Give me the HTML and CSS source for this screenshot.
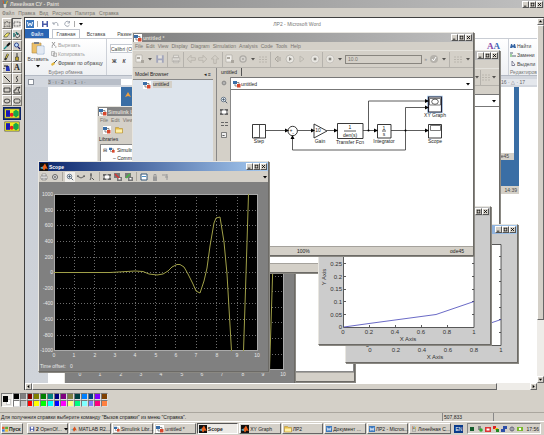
FILE: index.html
```html
<!DOCTYPE html>
<html lang="ru">
<head>
  <title>Линейная СУ - Paint</title>
  <meta charset="utf-8">
  <link rel="stylesheet" href="styles.css">
</head>
<body>
  <!-- shared icons -->
  <svg class="sprite" aria-hidden="true">
    <symbol id="min" viewBox="0 0 6 6"><path d="M1 5h3" stroke="#000"/></symbol>
    <symbol id="max" viewBox="0 0 6 6"><path d="M1 1.5h4M1.5 1v4M4.5 1v4M1 4.7h4" stroke="#000" stroke-width=".8"/></symbol>
    <symbol id="close" viewBox="0 0 6 6"><path d="M1.2 1.2l3.6 3.6M4.8 1.2L1.2 4.8" stroke="#000"/></symbol>
    <symbol id="down" viewBox="0 0 6 6"><path d="M1 2h4L3 4.500z"/></symbol>
    <symbol id="simulink" viewBox="0 0 8 8"><path fill="#fff" d="M0 0h8v8H0z"/><path fill="#3a6ea8" d="M0 1h4v3H0z"/><path fill="#d8482c" d="M4 4h3.500v3.500H4z"/><path d="M4 2.500h2V4M2 4v2h2" stroke="#444" fill="none" stroke-width=".6"/></symbol>
    <symbol id="matlab" viewBox="0 0 8 8"><path fill="#111" d="M0 0h8v8H0z"/><path fill="#4db8d8" d="M0 5l2.500-1.500L4 5 2.500 6z"/><path fill="#e8601c" d="M2.500 4L5 .5 7.700 6 5.500 5.500 4 7.500 3 6z"/></symbol>
    <symbol id="word" viewBox="0 0 8 8"><path fill="#3d78bd" d="M0 0h8v8H0z"/><path fill="none" stroke="#fff" d="M1.500 2l1 4L4 3l1.500 3 1-4"/></symbol>
    <symbol id="save" viewBox="0 0 8 8"><path fill="#4a5ba8" d="M1 1h6v6H1z"/><path fill="#fff" d="M2.500 1h3v2.500h-3zM2.500 5h3v2h-3z"/></symbol>
    <symbol id="printer" viewBox="0 0 8 8"><path fill="#fff" stroke="#777" stroke-width=".6" d="M2 1h4v2H2zM1 3h6v3H1zM2 5h4v2H2z"/></symbol>
    <symbol id="gear" viewBox="0 0 8 8"><circle cx="4" cy="4" r="2.500" fill="#ddd" stroke="#666"/><circle cx="4" cy="4" r=".9" fill="#666"/></symbol>
    <symbol id="zoom" viewBox="0 0 8 8"><circle cx="3.500" cy="3.500" r="2.300" fill="#e8f0f8" stroke="#567" stroke-width=".8"/><path d="M5.200 5.200l2 2M2.300 3.500h2.400M3.500 2.300v2.400" stroke="#456" stroke-width=".9"/></symbol>
    <symbol id="fit" viewBox="0 0 8 8"><path fill="#666" d="M0 1h8v6H0z"/><path fill="#fff" d="M2 2.500h4v3H2z"/><path stroke="#fff" d="M4 1v6M0 4h8" stroke-width=".8"/></symbol>
    <symbol id="left" viewBox="0 0 8 8"><path fill="none" stroke="#bab6ae" stroke-width=".8" d="M1 4l3-3v2h3.500v2H4v2z"/></symbol>
    <symbol id="folder" viewBox="0 0 8 8"><path fill="#e9bd45" stroke="#a98528" stroke-width=".5" d="M.5 1.500h3l1 1h3V7h-7z"/><path fill="#fff0a8" d="M1 3.500h6v3H1z"/></symbol>
    <symbol id="play" viewBox="0 0 10 10"><circle cx="5" cy="5" r="4" fill="#e9e7e2" stroke="#a5a29c" stroke-width=".6"/><path fill="#88857f" d="M4 3l3 2-3 2z"/></symbol>
    <symbol id="stop" viewBox="0 0 10 10"><circle cx="5" cy="5" r="4" fill="#e9e7e2" stroke="#b5b2ac" stroke-width=".6"/><path fill="#88857f" d="M3.700 3.700h2.600v2.600H3.700z"/></symbol>
    <symbol id="check" viewBox="0 0 10 10"><circle cx="5" cy="5" r="4" fill="#b5b2ac"/><path fill="none" stroke="#fff" d="M3 5l1.500 2L7 3"/></symbol>
    <symbol id="keys" viewBox="0 0 10 10"><path d="M1 3h8M1 5.500h8M1 8h8" stroke="#bab6ae" stroke-dasharray="2 1"/></symbol>
    <symbol id="newmodel" viewBox="0 0 10 10"><path fill="#f0eeea" stroke="#aaa69e" stroke-width=".6" d="M1 1h6v7H1z"/><path fill="#aaa69e" d="M2 3h3v2H2zM6 6h3v3H6z"/></symbol>
    <symbol id="paint" viewBox="0 0 8 8"><path fill="#d8d8d0" stroke="#555" stroke-width=".5" d="M2 3.500h4L5.500 8h-3z"/><path d="M3 4L2 .5" stroke="#d52" /><path d="M4 4V.5" stroke="#28a"/><path d="M5 4L6.500 1" stroke="#db2"/></symbol>
    <symbol id="shape" viewBox="0 0 12 8"><path fill="#f4ee20" stroke="#555" stroke-width=".5" d="M.5 .5h11v7H.5z"/><path fill="#1818b8" d="M1.500 1.500h3v5h-3z"/><circle cx="5.800" cy="5" r="1.500" fill="#e22"/><path fill="#18a848" d="M7 2.500L9 1.200l2 1.300v3L9 7 7 5.500z"/></symbol>

    <!-- step response on a 0..10 by -1000..1000 grid -->
    <symbol id="scopeplot" viewBox="39 181 229 189">
      <path fill="#000" d="M54 193h204v157H54z"/>
      <path class="grid" d="M74.500 193v157M94.500 193v157M115.500 193v157M135.500 193v157M155.500 193v157M175.500 193v157M196.500 193v157M216.500 193v157M237.500 193v157M54 209.500h204M54 224.500h204M54 240.500h204M54 256.500h204M54 271.500h204M54 287.500h204M54 302.500h204M54 318.500h204M54 334.500h204"/>
      <path d="M54.500 193v157M54 349.500h204M54 193.500h204M257.500 193v157" fill="none" stroke="#aaa"/>
      <path class="wave" d="M54 271.500H110L135 270 143 270.500 149 273 157 274 163 273 168 270 172 266 177 263.500H180L184 266 188 273 193 283 196 290 200 292 204 280 207 267 210 245 214 222 216 217 220 216 224 241 227 273 231.500 350M243.500 350L246 273 248.500 193"/>
      <g class="white-label end"><text x="53" y="195">1000</text><text x="53" y="211">800</text><text x="53" y="226">600</text><text x="53" y="242">400</text><text x="53" y="258">200</text><text x="53" y="273">0</text><text x="53" y="289">-200</text><text x="53" y="304">-400</text><text x="53" y="320">-600</text><text x="53" y="336">-800</text><text x="53" y="351">-1000</text></g>
      <g class="white-label mid"><text x="54" y="356">0</text><text x="74" y="356">1</text><text x="95" y="356">2</text><text x="115" y="356">3</text><text x="135" y="356">4</text><text x="156" y="356">5</text><text x="176" y="356">6</text><text x="196" y="356">7</text><text x="217" y="356">8</text><text x="237" y="356">9</text><text x="257" y="356">10</text></g>
      <text class="white-label" x="40" y="367">Time offset:&#160;&#160; 0</text>
    </symbol>

    <symbol id="xyplot" viewBox="319 215 171 127">
      <path fill="#fff" stroke="#333" stroke-width=".8" d="M343.500 225.500H474v101H343.500z"/>
      <path stroke="#333" stroke-width=".8" d="M369.500 326v-2M395.500 326v-2M421.500 326v-2M447.500 326v-2M344 313.500h2M344 300.500h2M344 288.500h2M344 275.500h2M344 262.500h2M344 250.500h2M474 313.500h-2M474 300.500h-2M474 288.500h-2M474 275.500h-2M474 262.500h-2M474 250.500h-2M474 237.500h-2"/>
      <path fill="none" stroke="#4444b8" stroke-width=".8" d="M344 326l25-3.500 67-9 38-13"/>
      <g class="axis-label end"><text x="342" y="328">0</text><text x="342" y="316">0.05</text><text x="342" y="303">0.1</text><text x="342" y="290">0.15</text><text x="342" y="278">0.2</text><text x="342" y="265">0.25</text></g>
      <g class="axis-label mid"><text x="343" y="333">0</text><text x="369" y="333">0.2</text><text x="395" y="333">0.4</text><text x="421" y="333">0.6</text><text x="447" y="333">0.8</text><text x="474" y="333">1</text><text x="408" y="340">X Axis</text><text transform="translate(326 276) rotate(-90)">Y Axis</text></g>
    </symbol>
  </svg>

  <header class="titlebar app-title">
    <svg class="i8"><use href="#paint"/></svg>
    <span class="title-text">Линейная СУ - Paint</span>
    <div class="win-buttons">
      <button aria-label="Свернуть"><svg><use href="#min"/></svg></button><button aria-label="Восстановить"><svg><use href="#max"/></svg></button><button aria-label="Закрыть"><svg><use href="#close"/></svg></button>
    </div>
  </header>
  <nav class="menu app-menu">
    <button>Файл</button><button>Правка</button><button>Вид</button><button>Рисунок</button><button>Палитра</button><button>Справка</button>
  </nav>

  <main>
    <aside class="toolbox">
      <div class="tools">
        <button aria-label="Произвольная область"><svg viewBox="0 0 8 8"><path fill="none" stroke="#333" stroke-dasharray="1 .5" stroke-width=".7" d="M4 1l1 2 2-1-1 3 1 2-3-1-3 1 1-3-1-2 2 .5z"/></svg></button>
        <button class="pressed" aria-label="Выделение"><svg viewBox="0 0 8 8"><path fill="none" stroke="#444" stroke-dasharray="1 .5" stroke-width=".8" d="M1 2h6v4H1z"/></svg></button>
        <button aria-label="Ластик"><svg viewBox="0 0 8 8"><path fill="#f4e96c" stroke="#333" stroke-width=".6" d="M1 5l3-3h3L4 6H1z"/></svg></button>
        <button aria-label="Заливка"><svg viewBox="0 0 8 8"><path fill="#ddd" stroke="#222" stroke-width=".7" d="M2 4l3-2 2 3-3 2z"/><path d="M1 2v4M3 1l2 3" stroke="#066" stroke-width="1.200"/></svg></button>
        <button aria-label="Выбор цветов"><svg viewBox="0 0 8 8"><path stroke="#188" stroke-width="1.300" d="M1 7l3-3"/><path stroke="#111" stroke-width="2" d="M4 4l3-3"/></svg></button>
        <button aria-label="Масштаб"><svg viewBox="0 0 8 8"><circle cx="3.500" cy="3" r="2" fill="#bfe0ff" stroke="#348"/><path stroke="#226" stroke-width="1.200" d="M5 5l2 2"/></svg></button>
        <button aria-label="Карандаш"><svg viewBox="0 0 8 8"><path stroke="#333" stroke-width="2.200" d="M2 7l3-6"/><path stroke="#e8d440" d="M3 5l2-4"/></svg></button>
        <button aria-label="Кисть"><svg viewBox="0 0 8 8"><path stroke="#333" d="M4 0v4"/><path fill="#bda224" stroke="#333" stroke-width=".6" d="M2.500 4h3v3.500h-3z"/></svg></button>
        <button aria-label="Распылитель"><svg viewBox="0 0 8 8"><path fill="#2334b8" d="M3 2h3l1 5H3z"/><path stroke="#111" d="M1 2h4M1 4v1"/></svg></button>
        <button class="letter-tool" aria-label="Надпись">A</button>
        <button aria-label="Линия"><svg viewBox="0 0 8 8"><path stroke="#111" stroke-width=".9" d="M1 1l6 6"/></svg></button>
        <button aria-label="Кривая"><svg viewBox="0 0 8 8"><path fill="none" stroke="#222" stroke-width=".9" d="M5 1q-3 1-1 3T3 7"/></svg></button>
        <button aria-label="Прямоугольник"><svg viewBox="0 0 8 8"><path fill="none" stroke="#222" stroke-width=".8" d="M1 2h6v4H1z"/></svg></button>
        <button aria-label="Многоугольник"><svg viewBox="0 0 8 8"><path fill="none" stroke="#222" stroke-width=".8" d="M1 7V4h2V2l4-1-2 3 2 3z"/></svg></button>
        <button aria-label="Эллипс"><svg viewBox="0 0 8 8"><ellipse cx="4" cy="4" rx="3" ry="2" fill="none" stroke="#222" stroke-width=".8"/></svg></button>
        <button aria-label="Скругленный прямоугольник"><svg viewBox="0 0 8 8"><rect x="1" y="2" width="6" height="4" rx="1.500" fill="none" stroke="#222" stroke-width=".8"/></svg></button>
      </div>
      <button class="option chosen" aria-label="Непрозрачный фон"><svg><use href="#shape"/></svg></button>
      <button class="option" aria-label="Прозрачный фон"><svg><use href="#shape"/></svg></button>
    </aside>

    <div class="workspace">
      <div class="canvas">
        <!-- Word -->
        <section class="word">
          <div class="word-title">
            <div class="quick"><svg class="i8"><use href="#word"/></svg><i></i><svg class="i8"><use href="#save"/></svg><svg class="i8" viewBox="0 0 8 8"><path fill="none" stroke="#a5abb5" d="M1 2v2h2M1 4q5-4 5 2"/></svg><svg class="i8" viewBox="0 0 8 8"><path fill="none" stroke="#a5abb5" d="M6 2a2.500 2.500 0 1 0 .5 3M6.500 1v2h-2"/></svg><i></i><svg class="i6"><use href="#down"/></svg></div>
            <span>ЛР2 - Microsoft Word</span>
          </div>
          <nav class="word-tabs"><button class="file">Файл</button><button class="current">Главная</button><button>Вставка</button><button>Разметка</button></nav>
          <div class="ribbon">
            <div class="group clipboard">
              <div class="group-body">
                <button class="paste"><svg viewBox="0 0 14 14"><path fill="#edc069" stroke="#b08a48" stroke-width=".6" d="M1 2h9v10H1z"/><path fill="#7a7f88" d="M3 1h5v2H3z"/><path fill="#fff" stroke="#7b9cc6" stroke-width=".6" d="M6 5h7v8H6z"/><path stroke="#9db6d6" stroke-width=".6" d="M7 7h5M7 9h5M7 11h5"/></svg>Вставить<svg class="i6"><use href="#down"/></svg></button>
                <div class="stack">
                  <button class="off"><svg class="i6" viewBox="0 0 6 6"><path stroke="#999" d="M1 0l3 4M4 0L1 4M.5 5h1.500M4 5h1.500"/></svg>Вырезать</button>
                  <button class="off"><svg class="i6" viewBox="0 0 6 6"><path fill="#eee" stroke="#999" stroke-width=".6" d="M.5.5h3v4h-3zM2.500 2h3v3.500h-3z"/></svg>Копировать</button>
                  <button><svg class="i6" viewBox="0 0 6 6"><path fill="#e4b73c" d="M0 4l3-2 1 2-3 2z"/><path stroke="#456" d="M3 3l3-3"/></svg>Формат по образцу</button>
                </div>
              </div>
              <div class="group-name">Буфер обмена</div>
            </div>
            <div class="group font-group">
              <input class="font-name" aria-label="Шрифт" value="Calibri (Осн">
              <div><button><b>Ж</b></button><button><b><i>К</i></b></button></div>
            </div>
            <div class="group style-group"><div class="big-a">A<span>A</span></div></div>
            <div class="group edit-group">
              <button><svg class="i6" viewBox="0 0 6 6"><path fill="#3564a3" d="M0 5l1-4h1l1 2 1-2h1l1 4H4L3 4 2 5z"/></svg>Найти</button>
              <button><svg class="i6" viewBox="0 0 6 6"><path stroke="#567" d="M0 1h3M2 4h4"/><path stroke="#4a4" d="M1 2v3"/></svg>Замени</button>
              <button><svg class="i6" viewBox="0 0 6 6"><path fill="#fff" stroke="#446" stroke-width=".6" d="M2 0v5l1-1 1 1V4h1z"/></svg>Выдели</button>
              <div class="group-name">Редактиров</div>
            </div>
          </div>
          <div class="ruler">
            <span class="tab-stop"></span>
            <div class="ruler-left">3 · ı · 2 · ı · 1 · ı ·</div><div class="ruler-mid"></div><div class="ruler-right">16 · △ · 17</div>
          </div>
          <div class="page-area">
            <div class="page">
              <div class="desk-left"><svg viewBox="0 0 8 8"><path fill="#f0a040" d="M1 6l3-5 3 5-3-1z"/></svg></div>
              <div class="desk-right"><div class="desk-screen"><div class="desk-foot">ode45</div></div><div class="desk-bar">14:39</div></div>
            </div>
          </div>
        </section>

        <!-- Simulink Library Browser -->
        <section class="window library">
          <header class="titlebar"><svg class="i8"><use href="#simulink"/></svg><span class="title-text">Simulink Library Browser</span></header>
          <nav class="menu"><button>File</button><button>Edit</button><button>View</button></nav>
          <div class="lib-tools"><svg class="i8"><use href="#simulink"/></svg><svg class="i8"><use href="#folder"/></svg></div>
          <div class="lib-label">Libraries</div>
          <div class="lib-tree"><div>⊟ <svg class="i6"><use href="#simulink"/></svg> Simulink</div><div class="child">– Commonly Used</div></div>
          <div class="win-status"></div>
        </section>

        <section class="window scope scope-back">
          <header class="titlebar active"><svg class="i8"><use href="#matlab"/></svg></header>
          <div class="scope-tools"></div>
          <svg class="scope-plot"><use href="#scopeplot"/></svg>
        </section>

        <section class="window model model-back">
          <header class="titlebar"><span class="title-text"></span>
            <div class="win-buttons"><button aria-label="Minimize"><svg><use href="#min"/></svg></button><button aria-label="Maximize"><svg><use href="#max"/></svg></button><button aria-label="Close"><svg><use href="#close"/></svg></button></div>
          </header>
          <nav class="menu"></nav>
          <div class="model-tools back-tools"><svg class="i6"><use href="#down"/></svg><i></i><svg class="i10"><use href="#keys"/></svg><svg class="i6"><use href="#down"/></svg></div>
          <div class="back-tab"></div>
          <div class="path back-path"><svg class="i6"><use href="#down"/></svg></div>
          <div class="back-body"></div>
          <div class="win-status"></div>
        </section>

        <section class="window xy xy-back">
          <header class="titlebar active"><span class="title-text"></span>
            <div class="win-buttons"><button aria-label="Minimize"><svg><use href="#min"/></svg></button><button aria-label="Maximize"><svg><use href="#max"/></svg></button><button aria-label="Close"><svg><use href="#close"/></svg></button></div>
          </header>
          <svg class="xy-plot"><use href="#xyplot"/></svg>
        </section>

        <section class="window xy xy-front">
          <header class="titlebar"><span class="title-text"></span>
            <div class="win-buttons"><button aria-label="Minimize"><svg><use href="#min"/></svg></button><button aria-label="Maximize"><svg><use href="#max"/></svg></button><button aria-label="Close"><svg><use href="#close"/></svg></button></div>
          </header>
          <svg class="xy-plot"><use href="#xyplot"/></svg>
        </section>

        <!-- model editor -->
        <section class="window model model-main">
          <header class="titlebar"><svg class="i8"><use href="#simulink"/></svg><span class="title-text">untitled *</span>
            <div class="win-buttons"><button aria-label="Minimize"><svg><use href="#min"/></svg></button><button aria-label="Maximize"><svg><use href="#max"/></svg></button><button aria-label="Close"><svg><use href="#close"/></svg></button></div>
          </header>
          <nav class="menu"><button>File</button><button>Edit</button><button>View</button><button>Display</button><button>Diagram</button><button>Simulation</button><button>Analysis</button><button>Code</button><button>Tools</button><button>Help</button></nav>
          <div class="model-tools">
            <svg class="i10"><use href="#newmodel"/></svg><svg class="i6"><use href="#down"/></svg><svg class="i10 faded"><use href="#save"/></svg><i></i>
            <svg class="i10 faded"><use href="#printer"/></svg><i></i>
            <svg class="i10"><use href="#left"/></svg><svg class="i10 flip"><use href="#left"/></svg><svg class="i10 up"><use href="#left"/></svg><i></i>
            <svg class="i10"><use href="#newmodel"/></svg><svg class="i10 faded"><use href="#gear"/></svg><svg class="i6"><use href="#down"/></svg><svg class="i10"><use href="#keys"/></svg><i></i>
            <svg class="i10" viewBox="0 0 10 10"><path fill="none" stroke="#aaa69e" d="M5 2L2 5l3 3zM7 3v4"/></svg><svg class="i10"><use href="#play"/></svg><svg class="i10" viewBox="0 0 10 10"><path fill="none" stroke="#bbb8b0" d="M3 2l4 3-4 3z"/></svg><svg class="i10"><use href="#stop"/></svg><i></i>
            <svg class="i10"><use href="#stop"/></svg><svg class="i6"><use href="#down"/></svg>
            <input class="stop-time" aria-label="Simulation stop time" value="10.0"><span class="more">»</span>
            <svg class="i10"><use href="#check"/></svg><svg class="i6"><use href="#down"/></svg><i></i><svg class="i10"><use href="#keys"/></svg><svg class="i6"><use href="#down"/></svg>
          </div>
          <div class="model-body">
            <div class="browser"><div class="browser-head"><span>Model Browser</span><span>◂ ≡</span></div><div class="browser-tree"><svg class="i8"><use href="#simulink"/></svg><span>untitled</span></div></div>
            <div class="editor">
              <div class="editor-tabs"><button>untitled</button></div>
              <div class="editor-row">
                <div class="side-tools"><svg class="i6"><use href="#gear"/></svg><svg class="i8"><use href="#zoom"/></svg><svg class="i8"><use href="#fit"/></svg><svg class="i8" viewBox="0 0 8 8"><path stroke="#666" stroke-dasharray="3 1" d="M1 2.500h7M1 5.500h7"/></svg><svg class="i6" viewBox="0 0 6 6"><path fill="#eee" stroke="#666" stroke-width=".8" d="M.5.5h5v5h-5z"/><path stroke="#666" d="M1.500 4l1-1 1 1"/></svg></div>
                <div class="editor-main">
                  <div class="path"><svg class="i8"><use href="#simulink"/></svg><select aria-label="Model path"><option>untitled</option></select><svg class="i6"><use href="#down"/></svg></div>
                  <svg class="diagram" viewBox="230 88 242 156">
                    <g fill="#fff" stroke="#222" stroke-width=".9">
                      <path d="M251.500 122.500h13v13.500h-13z"/><circle cx="291.700" cy="129" r="4.700"/><path d="M313 122l13 7-13 7z"/><path d="M336.500 121.500H362v15h-25.500zM376.500 122.500H390V136h-13.500z"/><path d="M427.500 122.500h13V136h-13z"/>
                      <path stroke="#a9cbef" stroke-width="2.500" d="M427.500 95h13v15h-13z"/><path stroke="#223" stroke-width="1.200" d="M427.500 95h13v15h-13z"/>
                      <path d="M428.500 96.500h11v6.500h-11zM429.500 123.500h10v5h-10z" stroke-width=".6"/><ellipse cx="434" cy="99.700" rx="3.300" ry="2.600" stroke-width=".7"/>
                    </g>
                    <path fill="none" stroke="#333" stroke-width=".8" d="M258.500 123v13M258 135.500h-5M264.500 128.500H287M296.500 128.500H313M326 128.500h10M362 128.500h14M367.500 128.500v-29.500H427M390 128.500h37M427 105.500h-22.500v42.500h-113V134M343 129h12M381 129h4"/>
                    <path d="M284 126.500l4 2-4 2zM310 126.500l4 2-4 2zM333 126.500l4 2-4 2zM373 126.500l4 2-4 2zM424 126.500l4 2-4 2zM424 97l4 2-4 2zM424 103.500l4 2-4 2zM289.500 137l2-4 2 4z"/><circle cx="367.500" cy="128.500" r="1"/><circle cx="404.500" cy="128.500" r="1"/>
                    <g class="block-label"><text x="258" y="141">Step</text><text x="319" y="141">Gain</text><text x="349" y="142">Transfer Fcn</text><text x="383" y="141">Integrator</text><text x="434" y="141">Scope</text><text x="434" y="115">XY Graph</text><text x="317" y="130">10</text><text x="349" y="127">1</text><text x="349" y="135">den(s)</text><text x="383" y="128">1</text><text x="383" y="134">s</text><text x="290" y="130">+</text><text x="292" y="133">-</text></g>
                  </svg>
                </div>
              </div>
            </div>
          </div>
          <div class="win-status model-status"><span>100%</span><span>ode45</span></div>
        </section>

        <section class="window scope scope-front">
          <header class="titlebar active"><svg class="i8"><use href="#matlab"/></svg><span class="title-text">Scope</span>
            <div class="win-buttons"><button aria-label="Minimize"><svg><use href="#min"/></svg></button><button aria-label="Maximize"><svg><use href="#max"/></svg></button><button aria-label="Close"><svg><use href="#close"/></svg></button></div>
          </header>
          <div class="scope-tools">
            <button aria-label="Print"><svg><use href="#printer"/></svg></button><button aria-label="Parameters"><svg><use href="#gear"/></svg></button><i></i>
            <button class="lit" aria-label="Zoom"><svg><use href="#zoom"/></svg></button>
            <button aria-label="Zoom X"><svg viewBox="0 0 8 8"><path fill="none" stroke="#555" stroke-width=".9" d="M0 3l2 1 2 1 2-1 2-1M1 2v2M7 2v2"/></svg></button>
            <button aria-label="Zoom Y"><svg viewBox="0 0 8 8"><path stroke="#555" d="M3 0v5M2 2h2M4 5l2 2M3 5l-1 2"/></svg></button><i></i>
            <button aria-label="Autoscale"><svg><use href="#fit"/></svg></button>
            <button aria-label="Save axes"><svg viewBox="0 0 8 8"><path fill="#777" d="M0 0h6v5H0zM3 4h5v4H3z"/><path stroke="#d33" stroke-width="1.500" d="M1 1l4 4"/><path fill="#fff" d="M4.500 5h2v1.500h-2z"/></svg></button>
            <button aria-label="Restore axes"><svg viewBox="0 0 8 8"><path fill="#777" d="M0 0h6v5H0zM3 4h5v4H3z"/><path stroke="#4b4" stroke-width="1.500" d="M1 5l4-4"/><path fill="#fff" d="M4.500 5h2v1.500h-2z"/></svg></button><i></i>
            <button aria-label="Floating scope"><svg viewBox="0 0 8 8"><path fill="#fff" stroke="#357" d="M1 1h6v6H1z"/><path stroke="#4a90c8" d="M2 3.500h4"/></svg></button>
            <button aria-label="Lock"><svg viewBox="0 0 8 8"><path fill="#999" d="M2 3.500h4V8H2z"/><path fill="none" stroke="#999" d="M3 4V1.500h2V4"/></svg></button>
            <button aria-label="Signal selection"><svg viewBox="0 0 8 8"><path fill="none" stroke="#999" d="M0 2h5M3 4h3M5 1v6"/></svg></button>
            <svg class="i6 tools-end"><use href="#down"/></svg>
          </div>
          <svg class="scope-plot"><use href="#scopeplot"/></svg>
        </section>
      </div>
      <div class="vscroll"><button aria-label="Вверх"><svg class="up"><use href="#down"/></svg></button><span class="thumb"></span><span class="track"></span><button aria-label="Вниз"><svg><use href="#down"/></svg></button></div>
      <div class="hscroll"><button aria-label="Влево"><svg class="turn-left"><use href="#down"/></svg></button><span class="thumb"></span><span class="track"></span><button aria-label="Вправо"><svg class="turn-right"><use href="#down"/></svg></button></div>
      <div class="corner"></div>
    </div>
  </main>

  <div class="colorbox">
    <div class="current-color"><span class="back-color"></span><span class="fore-color"></span></div>
    <div class="swatches" id="swatches"></div>
  </div>
  <div class="statusbar"><span class="hint">Для получения справки выберите команду "Вызов справки" из меню "Справка".</span><span class="coords">507,833</span><span class="size"></span></div>

  <footer class="taskbar">
    <button class="start"><svg class="i6" viewBox="0 0 8 8"><path fill="#e35b2c" d="M0 1l3.500 0v3H0z"/><path fill="#57ab3c" d="M4.200 1H8v3H4.200z"/><path fill="#3d7cd6" d="M0 4.500h3.500v3H0z"/><path fill="#f1c033" d="M4.200 4.500H8v3H4.200z"/></svg>Пуск</button>
    <div class="tasks">
      <button><svg class="i6"><use href="#save"/></svg><span><b>2</b> OpenOf...</span><svg class="i6"><use href="#down"/></svg></button>
      <button><svg class="i6" viewBox="0 0 8 8"><path fill="#4db8d8" d="M0 5l2.500-1.500L4 5 2.500 6z"/><path fill="#d8501c" d="M2.500 4L5 .5 7.700 6 5.500 5.500 4 7.500 3 6z"/></svg><span>MATLAB R2...</span></button>
      <button><svg class="i6"><use href="#simulink"/></svg><span>Simulink Libr...</span></button>
      <button><svg class="i8"><use href="#simulink"/></svg><span>untitled *</span></button>
      <button class="pressed"><svg class="i8"><use href="#matlab"/></svg><span>Scope</span></button>
      <button><svg class="i8"><use href="#matlab"/></svg><span>XY Graph</span></button>
      <button><svg class="i8"><use href="#folder"/></svg><span>ЛР2</span></button>
      <button><svg class="i6"><use href="#word"/></svg><span>Документ ...</span></button>
      <button><svg class="i6"><use href="#word"/></svg><span>ЛР2 - Micros...</span></button>
      <button><svg class="i6"><use href="#paint"/></svg><span>Линейная С...</span></button>
    </div>
    <span class="lang">EN</span>
    <div class="tray">
      <svg viewBox="0 0 6 6"><path fill="#145c2c" d="M1 1h4v4H1z"/></svg>
      <svg viewBox="0 0 6 6"><path fill="#888" d="M1 0h3v4H1z"/><circle cx="4" cy="4" r="1.800" fill="#3a3"/></svg>
      <svg viewBox="0 0 6 6"><path fill="#d33" d="M0 1h6v5H0z"/><path fill="#fff" d="M1.500 2.500h3v2h-3z"/></svg>
      <svg viewBox="0 0 6 6"><path fill="#d22" d="M0 0h3v3H0z"/><path fill="#eb2" d="M2 2h3v2H2z"/><path fill="#282" d="M3 3h3v3H3z"/></svg>
      <svg viewBox="0 0 6 6"><path fill="#2c4da8" d="M2 0h4v3H2zM0 3h4v3H0z"/></svg>
      <svg viewBox="0 0 6 6"><circle cx="3" cy="3" r="2" fill="#ddd" stroke="#667"/><path stroke="#667" d="M3 1v4"/></svg>
      <svg viewBox="0 0 6 6"><path fill="#76b82a" d="M0 1h6v4H0z"/><circle cx="3" cy="3" r="1.200" fill="#fff"/></svg>
      <time>17:56</time>
    </div>
  </footer>

  <script>
    "use strict";
// fill the palette, two rows of 14
let colors = ["#000000", "#808080", "#800000", "#808000", "#008000", "#008080", "#000080", "#800080", "#808040", "#004040", "#0080ff", "#004080", "#8000ff", "#804000",
  "#ffffff", "#c0c0c0", "#ff0000", "#ffff00", "#00ff00", "#00ffff", "#0000ff", "#ff00ff", "#ffff80", "#00ff80", "#80ffff", "#8080ff", "#ff0080", "#ff8040"];
let box = document.getElementById("swatches");
for (let i = 0; i < colors.length; i++) {
  let b = document.createElement("button");
  b.style.backgroundColor = colors[i];
  b.setAttribute("aria-label", colors[i]);
  box.appendChild(b);
}
  </script>
</body>
</html>
```
FILE: styles.css
```css
* {
  box-sizing: border-box;
}
body {
  margin: 0;
  height: 100vh;
  display: flex;
  flex-direction: column;
  overflow: hidden;
  background-color: #d4d0c8;
  font-family: "Liberation Sans", Arial, sans-serif;
  font-size: 5px;
  line-height: 6px;
  color: #222;
}
button, input, select {
  font: inherit;
  color: inherit;
  margin: 0;
  padding: 0;
  border: 0;
  border-radius: 0;
  background: none;
  white-space: nowrap;
}
svg {
  display: block;
  flex: none;
}
.sprite {
  position: absolute;
  width: 0;
  height: 0;
}
.i6 { width: 6px; height: 6px; }
.i8 { width: 8px; height: 8px; }
.i10 { width: 10px; height: 10px; }
.faded { opacity: .35; }
.flip { transform: scaleX(-1); }
.up { transform: rotate(180deg); }
.i10.up { transform: rotate(90deg); }
.turn-left { transform: rotate(90deg); }
.turn-right { transform: rotate(-90deg); }

/* title bars and menus */
.titlebar {
  display: flex;
  align-items: center;
  gap: 1px;
  height: 9px;
  padding: 0 1px;
  flex: none;
  background: linear-gradient(to right, #808080, #c0c0c0);
  color: #dedad2;
  font-weight: bold;
}
.titlebar.active {
  background: linear-gradient(to right, #0a246a, #a6caf0);
  color: #fff;
}
.title-text {
  flex: 1;
  white-space: nowrap;
}
.win-buttons {
  display: flex;
}
.win-buttons button {
  width: 7px;
  height: 7px;
  background-color: #d4d0c8;
  border: 1px solid;
  border-color: #fff #555 #555 #fff;
}
.win-buttons svg {
  width: 5px;
  height: 5px;
}
.app-title {
  height: 8px;
}
.menu {
  display: flex;
  align-items: center;
  gap: 3px;
  height: 8px;
  padding: 0 2px;
  flex: none;
  color: #77746e;
}
.app-menu {
  gap: 4px;
  height: 9px;
}

main {
  flex: 1;
  min-height: 0;
  display: flex;
}
.toolbox {
  width: 24px;
  padding: 1px 2px;
  flex: none;
}
.tools {
  display: grid;
  grid-template-columns: 1fr 1fr;
  grid-auto-rows: 11px;
  margin-bottom: 1px;
}
.tools button {
  display: flex;
  align-items: center;
  justify-content: center;
  border: 1px solid;
  border-color: #fff #77746e #77746e #fff;
}
.tools svg {
  width: 8px;
  height: 8px;
}
.tools .pressed {
  border-color: #555 #fff #fff #555;
  background-color: #eae8e4;
}
.letter-tool {
  font: bold 8px "Liberation Serif", serif;
}
.option {
  display: block;
  margin-left: 1px;
  padding: 1px;
}
.option svg {
  width: 16px;
  height: 11px;
}
.chosen {
  background-color: #0a246a;
}

.workspace {
  flex: 1;
  min-width: 0;
  display: grid;
  grid-template-columns: 1fr 7px;
  grid-template-rows: 1fr 7px;
  border-left: 1px solid #404040;
  border-top: 1px solid #404040;
}
.canvas {
  position: relative;
  overflow: hidden;
  min-height: 0;
}
.vscroll, .hscroll {
  display: flex;
  background-color: #eeece8;
}
.vscroll {
  flex-direction: column;
}
.vscroll button, .hscroll button, .thumb {
  border: 1px solid;
  border-color: #fff #666 #666 #fff;
  background-color: #d4d0c8;
}
.vscroll button, .hscroll button {
  width: 7px;
  height: 7px;
  flex: none;
}
.vscroll svg, .hscroll svg {
  width: 5px;
  height: 5px;
}
.vscroll .thumb { flex: 296; }
.vscroll .track { flex: 57; }
.hscroll .thumb { flex: 465; }
.hscroll .track { flex: 33; }

/* Word */
.word {
  height: 100%;
  display: flex;
  flex-direction: column;
  background-color: #fff;
  color: #444;
}
.word-title {
  height: 11px;
  flex: none;
  display: grid;
  grid-template-columns: 82px 1fr;
  align-items: center;
  text-align: center;
  color: #777;
}
.word-title span {
  padding-right: 50px;
}
.quick {
  display: flex;
  align-items: center;
  gap: 3px;
  padding-left: 1px;
}
.quick i {
  height: 6px;
  border-left: 1px solid #aaa;
}
.word-tabs {
  display: flex;
  height: 10px;
  flex: none;
  border-bottom: 1px solid #c9cdd4;
}
.word-tabs button {
  width: 32px;
}
.word-tabs .file {
  width: 24px;
  margin-right: 3px;
  background-color: #2a65b4;
  color: #fff;
}
.word-tabs .current {
  width: 28px;
  border: 1px solid #c0c5ce;
  border-bottom: 0;
  background-color: #fff;
}
.ribbon {
  display: flex;
  height: 37px;
  flex: none;
  border-bottom: 1px solid #b4bac4;
  background: linear-gradient(#fff, #eef0f3);
}
.group {
  flex: none;
  padding: 2px;
  border-right: 1px solid #cdd1d8;
}
.ribbon button {
  display: flex;
  align-items: center;
  gap: 1px;
}
.clipboard {
  width: 82px;
}
.group-body {
  display: flex;
  gap: 2px;
  height: 28px;
}
.ribbon .paste {
  flex-direction: column;
  width: 22px;
}
.paste svg:first-child {
  width: 14px;
  height: 14px;
}
.stack {
  display: flex;
  flex-direction: column;
  gap: 3px;
  padding-top: 1px;
}
.off {
  color: #a0a0a0;
}
.group-name {
  text-align: center;
  color: #777;
}
.font-group {
  flex: 1;
  border: 0;
  padding: 5px 3px;
}
.font-group div {
  display: flex;
  gap: 6px;
  padding: 5px 2px;
}
.font-name {
  width: 40px;
  height: 9px;
  border: 1px solid #c5cad2;
  background-color: #fff;
}
.style-group {
  width: 24px;
}
.big-a {
  font: bold 9px/10px "Liberation Serif", serif;
  color: #8848a8;
}
.big-a span {
  color: #3a6ab8;
}
.edit-group {
  width: 28px;
  border: 0;
  padding: 2px 1px;
}
.edit-group button {
  height: 9px;
}
.edit-group .group-name {
  text-align: left;
  padding-top: 1px;
}
.ruler {
  display: flex;
  align-items: center;
  height: 11px;
  flex: none;
  padding-left: 3px;
  background-color: #d3d7de;
  color: #666;
  white-space: nowrap;
}
.tab-stop {
  width: 6px;
  height: 6px;
  margin-right: 14px;
  border: 1px solid #8c929c;
  background-color: #fff;
}
.ruler-left {
  width: 73px;
  background-color: #b8bec8;
}
.ruler-mid {
  flex: 1;
  height: 6px;
  background-color: #fff;
}
.ruler-right {
  width: 46px;
  padding-left: 10px;
  background-color: #e4e7ec;
}
.page-area {
  flex: 1;
  min-height: 0;
  padding-left: 23px;
  background: linear-gradient(#c9ced6, #d0d4da);
}
.page {
  height: 100%;
  display: flex;
  justify-content: space-between;
  padding: 0 18px 0 73px;
  background-color: #fff;
}
.desk-left {
  width: 12px;
  height: 20px;
  padding: 4px 3px;
  background-color: #3a6ea5;
}
.desk-left svg {
  width: 8px;
  height: 8px;
}
.desk-right {
  width: 40px;
  height: 107px;
  display: flex;
  flex-direction: column;
  background-color: #3a6ea5;
}
.desk-screen {
  height: 73px;
  margin-right: 5px;
  display: flex;
  align-items: flex-end;
  background-color: #fff;
}
.desk-foot {
  flex: 1;
  height: 7px;
  padding-right: 5px;
  text-align: right;
  background-color: #d4d0c8;
}
.desk-bar {
  margin-top: auto;
  height: 8px;
  padding: 1px 2px;
  text-align: right;
  background-color: #d4d0c8;
}

/* windows lying on the canvas */
.window {
  position: absolute;
  display: flex;
  flex-direction: column;
  border: 1px solid;
  border-color: #e8e6e0 #6c6a66 #6c6a66 #e8e6e0;
  background-color: #d4d0c8;
  box-shadow: 1px 1px 0 #8a8882;
}
.library { left: 72px; top: 88px; width: 258px; height: 276px; }
.scope-back { left: 39px; top: 162px; width: 231px; height: 211px; }
.model-back { left: 135px; top: 32px; width: 340px; height: 223px; }
.xy-back { left: 320px; top: 206px; width: 173px; height: 139px; }
.xy-front { left: 293px; top: 188px; width: 173px; height: 139px; }
.model-main { left: 107px; top: 14px; width: 342px; height: 224px; }
.scope-front { left: 13px; top: 143px; width: 231px; height: 211px; }

.win-status {
  height: 9px;
  flex: none;
  border-top: 1px solid #a5a29c;
}
.lib-tools {
  display: flex;
  gap: 4px;
  height: 12px;
  padding: 2px 5px;
}
.lib-label {
  height: 8px;
  padding-left: 1px;
}
.lib-tree {
  flex: 1;
  margin-left: 2px;
  padding: 2px;
  border: 1px solid #888;
  background-color: #fff;
}
.lib-tree div {
  display: flex;
  gap: 2px;
  height: 8px;
  white-space: nowrap;
}
.lib-tree .child {
  padding-left: 10px;
}

.scope {
  background-color: #808080;
}
.scope-tools {
  display: flex;
  align-items: center;
  gap: 1px;
  height: 11px;
  flex: none;
  background-color: #d4d0c8;
}
.scope-tools button {
  width: 10px;
  height: 10px;
  padding: 1px;
}
.scope-tools button svg {
  width: 8px;
  height: 8px;
}
.scope-tools .lit {
  background-color: #f2f0ec;
}
.scope-tools i {
  height: 9px;
  border-left: 1px solid #aaa69e;
  margin: 0 1px;
}
.tools-end {
  margin-left: auto;
}
.scope-plot {
  width: 100%;
  height: 189px;
}
.grid {
  fill: none;
  stroke: #6c6c6c;
  stroke-width: 1;
  stroke-dasharray: 1 2;
}
.wave {
  fill: none;
  stroke: #a0a048;
  stroke-width: 1;
}
.white-label {
  font-size: 5px;
  fill: #e8e8e8;
}
.axis-label {
  font-size: 6px;
  fill: #333;
}
.end { text-anchor: end; }
.mid { text-anchor: middle; }

.xy {
  background-color: #ccc;
}
.xy-plot {
  width: 100%;
  height: 127px;
}

.model-tools {
  display: flex;
  align-items: center;
  justify-content: space-between;
  height: 18px;
  flex: none;
  padding: 0 2px;
  border-top: 1px solid #e4e2dc;
  border-bottom: 1px solid #b5b2ac;
}
.model-tools i {
  height: 15px;
  border-left: 1px solid #b5b2ac;
}
.model-tools .i6 {
  opacity: .6;
}
.back-tools {
  justify-content: flex-end;
}
.stop-time {
  width: 77px;
  height: 9px;
  padding-left: 2px;
  border: 1px solid #88857f;
  color: #77746e;
}
.more {
  color: #888;
}
.model-body {
  flex: 1;
  min-height: 0;
  display: flex;
}
.browser {
  width: 80px;
  flex: none;
  display: flex;
  flex-direction: column;
}
.browser-head {
  display: flex;
  justify-content: space-between;
  height: 11px;
  padding: 3px 2px;
}
.browser-tree {
  flex: 1;
  display: flex;
  gap: 2px;
  padding: 1px 10px;
  border-top: 1px solid #888;
  background-color: #dde4ec;
}
.browser-tree span {
  height: 7px;
  padding-right: 3px;
  background-color: #d4d0c8;
}
.editor {
  flex: 1;
  margin-left: 3px;
  display: flex;
  flex-direction: column;
  border-left: 1px solid #888;
}
.editor-tabs {
  height: 9px;
}
.editor-tabs button {
  height: 8px;
  padding: 0 4px;
  border-right: 1px solid #555;
}
.editor-row {
  flex: 1;
  min-height: 0;
  display: flex;
}
.side-tools {
  width: 13px;
  flex: none;
  display: flex;
  flex-direction: column;
  align-items: center;
  gap: 4px;
  padding-top: 3px;
}
.side-tools svg:first-child {
  margin-bottom: 6px;
}
.editor-main {
  flex: 1;
  border-left: 1px solid #888;
  background-color: #fff;
}
.path {
  display: flex;
  align-items: center;
  height: 13px;
  padding: 0 2px;
  border-top: 1px solid #777;
  border-bottom: 1px solid #777;
  background-color: #fff;
}
.path select {
  flex: 1;
  appearance: none;
}
.diagram {
  width: 100%;
  height: auto;
}
.block-label {
  font-size: 5px;
  text-anchor: middle;
  fill: #222;
}
.model-status {
  display: flex;
  justify-content: space-between;
  padding: 1px 9px 0 164px;
}
.back-tab {
  height: 8px;
}
.back-path {
  justify-content: flex-end;
}
.back-body {
  flex: 1;
  background-color: #fff;
}

/* palette, status line, taskbar */
.colorbox {
  display: flex;
  height: 22px;
  flex: none;
  padding: 3px 1px;
}
.current-color {
  position: relative;
  width: 12px;
  height: 14px;
  border: 1px solid;
  border-color: #777 #fff #fff #777;
  background-color: #eceae6;
}
.fore-color, .back-color {
  position: absolute;
  width: 5px;
  height: 6px;
}
.fore-color { left: 1px; top: 2px; background-color: #000; }
.back-color { left: 4px; top: 5px; background-color: #fff; border: 1px solid #ccc; }
.swatches {
  display: grid;
  grid-template-columns: repeat(14, 1fr);
  grid-auto-rows: 7px;
  width: 95px;
}
.swatches button {
  border: 1px solid;
  border-color: #777 #ddd #ddd #777;
}
.statusbar {
  display: flex;
  align-items: center;
  height: 9px;
  flex: none;
  border-top: 1px solid #aaa69e;
}
.hint {
  flex: 1;
  padding-left: 1px;
}
.coords, .size {
  height: 8px;
  padding: 1px;
  width: 51px;
  border-left: 1px solid #888;
}
.taskbar {
  display: flex;
  align-items: center;
  gap: 4px;
  height: 14px;
  flex: none;
  padding: 1px 3px 1px 1px;
  border-top: 1px solid #fff;
}
.taskbar button {
  display: flex;
  align-items: center;
  gap: 1px;
  height: 11px;
  padding: 0 1px;
  border: 1px solid;
  border-color: #fff #666 #666 #fff;
}
.taskbar .start {
  width: 22px;
  padding: 0;
  font-weight: bold;
}
.tasks {
  flex: 1;
  min-width: 0;
  display: flex;
  gap: 1px;
}
.tasks button {
  flex: 1 1 0;
  min-width: 0;
}
.taskbar .pressed {
  border-color: #555 #fff #fff #555;
  background-color: #eceae6;
  font-weight: bold;
}
.lang {
  width: 9px;
  height: 8px;
  padding: 1px 0;
  text-align: center;
  background-color: #0a3a8a;
  color: #fff;
}
.tray {
  display: flex;
  align-items: center;
  gap: 2px;
  height: 11px;
  padding: 0 1px;
  border: 1px solid;
  border-color: #888 #fff #fff #888;
}
.tray svg {
  width: 6px;
  height: 6px;
}
.tray time {
  padding-left: 1px;
}
```
